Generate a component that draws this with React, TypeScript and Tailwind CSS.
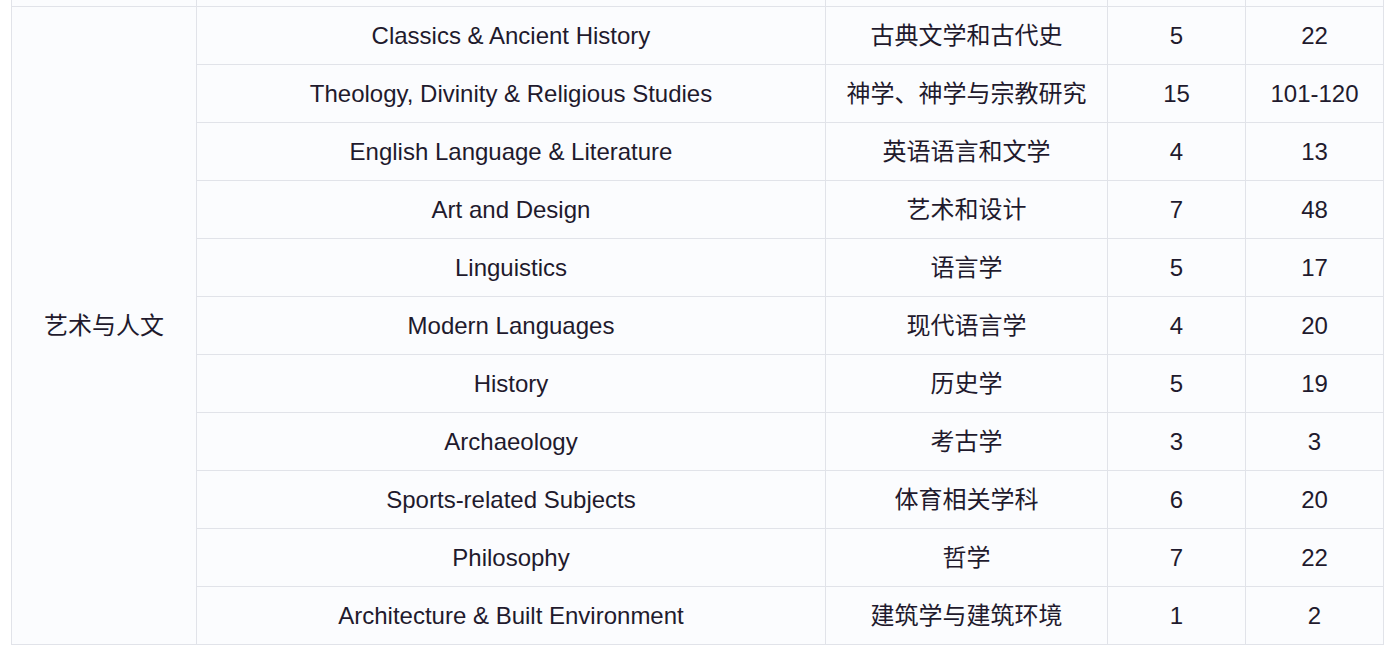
const rows: [string, string, string, string][] = [
  ["Classics & Ancient History", "古典文学和古代史", "5", "22"],
  ["Theology, Divinity & Religious Studies", "神学、神学与宗教研究", "15", "101-120"],
  ["English Language & Literature", "英语语言和文学", "4", "13"],
  ["Art and Design", "艺术和设计", "7", "48"],
  ["Linguistics", "语言学", "5", "17"],
  ["Modern Languages", "现代语言学", "4", "20"],
  ["History", "历史学", "5", "19"],
  ["Archaeology", "考古学", "3", "3"],
  ["Sports-related Subjects", "体育相关学科", "6", "20"],
  ["Philosophy", "哲学", "7", "22"],
  ["Architecture & Built Environment", "建筑学与建筑环境", "1", "2"],
];

const cell = "border border-[#e1e3e9] text-center align-middle p-0";

export default function App() {
  return (
    <div
      className="h-[652px] w-[1390px] overflow-hidden bg-white"
      style={{ fontFamily: '"Liberation Sans", "Noto Sans CJK SC", sans-serif' }}
    >
      <table className="ml-[11px] -mt-[10px] w-[1372px] table-fixed border-collapse bg-[#fbfcfe] text-[24px] leading-none text-[#1f1a2d]">
        <colgroup>
          <col className="w-[185px]" />
          <col className="w-[629px]" />
          <col className="w-[282px]" />
          <col className="w-[138px]" />
          <col className="w-[138px]" />
        </colgroup>
        <tbody>
          <tr className="h-[16px]">
            <td className={cell}></td>
            <td className={cell}></td>
            <td className={cell}></td>
            <td className={cell}></td>
            <td className={cell}></td>
          </tr>
          {rows.map((r, i) => (
            <tr key={i} className="h-[58px]">
              {i === 0 && (
                <td rowSpan={rows.length} className={cell}>
                  艺术与人文
                </td>
              )}
              <td className={cell}>{r[0]}</td>
              <td className={cell}>{r[1]}</td>
              <td className={cell}>{r[2]}</td>
              <td className={cell}>{r[3]}</td>
            </tr>
          ))}
        </tbody>
      </table>
    </div>
  );
}
